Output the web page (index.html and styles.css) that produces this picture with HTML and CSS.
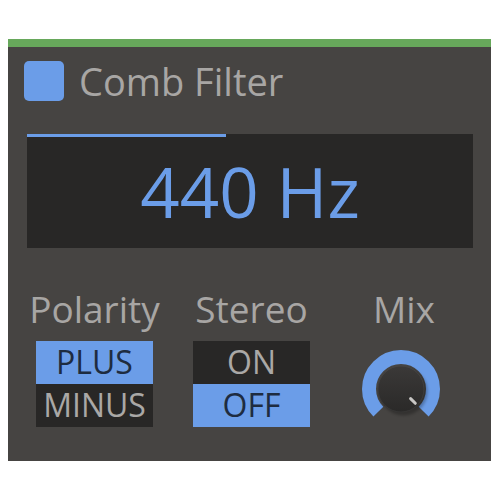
FILE: index.html
```html
<!DOCTYPE html>
<html lang="en">
<head>
  <meta charset="UTF-8">
  <meta name="viewport" content="width=device-width, initial-scale=1.0">
  <title>Comb Filter</title>
  <link rel="stylesheet" href="styles.css">
</head>
<body>
  <div class="panel">
    <div class="header">
      <div class="enable"></div>
      <h1 class="title">Comb Filter</h1>
    </div>

    <div class="display">
      <div class="display-bar" style="width: 44.6%;"></div>
      <div class="display-value">440 Hz</div>
    </div>

    <div class="controls">
      <div class="control">
        <div class="control-label">Polarity</div>
        <div class="toggle">
          <div class="toggle-item active">PLUS</div>
          <div class="toggle-item">MINUS</div>
        </div>
      </div>

      <div class="control">
        <div class="control-label">Stereo</div>
        <div class="toggle">
          <div class="toggle-item">ON</div>
          <div class="toggle-item active">OFF</div>
        </div>
      </div>

      <div class="control">
        <div class="control-label">Mix</div>
        <svg class="knob" width="84" height="84" viewBox="0 0 84 84">
          <defs>
            <linearGradient id="knobFill" x1="0" y1="0" x2="0" y2="1">
              <stop offset="0" stop-color="#3b3938"/>
              <stop offset="1" stop-color="#2a2928"/>
            </linearGradient>
            <filter id="soft" x="-30%" y="-30%" width="160%" height="160%">
              <feGaussianBlur stdDeviation="1.5"/>
            </filter>
          </defs>
          <!-- value ring, 270deg sweep, full -->
          <path d="M16.37 64.63 A32 32 0 1 1 61.63 64.63" fill="none" stroke="#6b9de8" stroke-width="14"/>
          <circle cx="41.5" cy="44.5" r="24" fill="rgba(0,0,0,0.28)" filter="url(#soft)"/>
          <circle cx="39" cy="42" r="23.5" fill="url(#knobFill)"/>
          <circle cx="39" cy="42" r="23" fill="none" stroke="rgba(255,255,255,0.06)" stroke-width="1"/>
          <line x1="48.6" y1="51.6" x2="53.3" y2="56.3" stroke="#c9c7c5" stroke-width="3" stroke-linecap="round"/>
        </svg>
      </div>
    </div>
  </div>
</body>
</html>
```

FILE: styles.css
```css
body {
  margin: 0;
  background-color: white;
  font-family: 'Open Sans', 'Noto Sans', sans-serif;
}
.panel {
  margin: 39px 0 0 8px;
  width: 483px;
  height: 414px;
  background-color: #464442;
  border-top: 8px solid #67a85b;
}
.header {
  display: flex;
  align-items: flex-start;
  gap: 15px;
  padding: 14px 0 0 16px;
}
.enable {
  width: 40px;
  height: 40px;
  border-radius: 5px;
  background-color: #6b9de8;
}
.title {
  margin: 0;
  font-size: 38px;
  font-weight: normal;
  line-height: 40px;
  color: #a8a6a4;
}
.display {
  position: relative;
  margin: 33px 0 0 19px;
  width: 446px;
  height: 114px;
  background-color: #282726;
  display: flex;
  align-items: center;
  justify-content: center;
}
.display-bar {
  position: absolute;
  top: 0;
  left: 0;
  height: 3px;
  background-color: #6b9de8;
}
.display-value {
  font-size: 69px;
  line-height: 80px;
  color: #6b9de8;
  margin-bottom: 1px;
}
.controls {
  display: grid;
  grid-template-columns: 157px 157px 148px;
  padding-left: 8px;
  margin-top: 41px;
}
.control {
  display: flex;
  flex-direction: column;
  align-items: center;
}
.control-label {
  font-size: 37px;
  line-height: 40px;
  color: #a8a6a4;
  margin-bottom: 12px;
}
.toggle {
  width: 117px;
}
.toggle-item {
  height: 43px;
  line-height: 42px;
  font-size: 32px;
  text-align: center;
  background-color: #282726;
  color: #aaa8a6;
}
.toggle-item.active {
  background-color: #6b9de8;
  color: #1e2c40;
}
.knob {
  display: block;
  margin-top: 6px;
}
```
